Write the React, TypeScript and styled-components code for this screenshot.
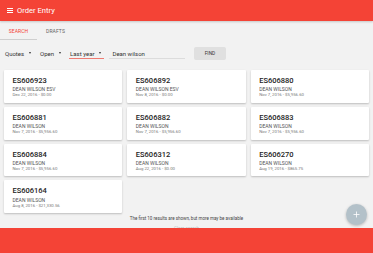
import React from "react";
import styled, { createGlobalStyle } from "styled-components";

const Global = createGlobalStyle`
  html, body { margin: 0; padding: 0; background: #f2f2f2; }
  body { font-family: Roboto, "Liberation Sans", Arial, sans-serif; color: #333; }
  * { box-sizing: border-box; }
`;

const RED = "#f44336";

const Page = styled.div`
  min-height: 253px;
  background: #f2f2f2;
`;

const Header = styled.header`
  height: 21px;
  background: ${RED};
  display: flex;
  align-items: center;
  padding-left: 7px;
  gap: 4px;
  box-shadow: 0 1px 2px rgba(0, 0, 0, 0.18);
  position: relative;
  z-index: 2;
`;

const Burger = styled.span`
  display: flex;
  flex-direction: column;
  justify-content: space-between;
  width: 6px;
  height: 5px;
  & > i {
    display: block;
    height: 1px;
    background: #fff;
  }
`;

const Title = styled.h1`
  margin: 0;
  font-size: 7.6px;
  font-weight: 400;
  color: #fff;
  line-height: 9px;
`;

const Tabs = styled.nav`
  display: flex;
  height: 19px;
`;

const Tab = styled.div<{ $active?: boolean }>`
  width: 37px;
  display: flex;
  align-items: center;
  justify-content: center;
  padding-top: 2px;
  font-size: 5px;
  letter-spacing: 0.1px;
  color: ${(p) => (p.$active ? RED : "#666")};
  border-bottom: 1px solid ${(p) => (p.$active ? "#cfcfcf" : "transparent")};
`;

const Filters = styled.div`
  display: flex;
  align-items: center;
  height: 14px;
  margin-top: 6.5px;
  padding-left: 3.5px;
  gap: 4.5px;
`;

const Select = styled.div<{ $focused?: boolean }>`
  display: inline-flex;
  align-items: center;
  gap: 5px;
  height: 10px;
  padding: 0 3px 0 1.5px;
  font-size: 6px;
  line-height: 9px;
  color: #333;
  border-bottom: 1px solid ${(p) => (p.$focused ? "#ef7b72" : "transparent")};
`;

const Caret = styled.span`
  width: 0;
  height: 0;
  border-left: 1.6px solid transparent;
  border-right: 1.6px solid transparent;
  border-top: 2px solid #333;
`;

const TextField = styled.div`
  width: 76px;
  height: 10px;
  margin-left: 0.5px;
  padding-left: 3px;
  font-size: 6px;
  line-height: 9px;
  color: #333;
  border-bottom: 1px solid #dcdcdc;
`;

const Button = styled.button`
  margin-left: 4px;
  width: 32px;
  height: 13px;
  border: none;
  border-radius: 2px;
  background: #e0e0e0;
  font-family: inherit;
  font-size: 4.8px;
  color: #333;
  padding: 0;
`;

const Grid = styled.div`
  display: grid;
  grid-template-columns: repeat(3, 1fr);
  column-gap: 5px;
  row-gap: 4px;
  padding: 0 4px;
  margin-top: 9.5px;
`;

const Card = styled.div`
  background: #fff;
  padding: 6px 8.5px 5.5px;
  box-shadow: 0 1px 2px rgba(0, 0, 0, 0.22);
  border-radius: 1px;
`;

const CardTitle = styled.div`
  font-size: 7.5px;
  line-height: 9px;
  font-weight: 500;
  color: #222;
`;

const CardName = styled.div`
  margin-top: 1.3px;
  font-size: 5px;
  line-height: 6px;
  color: #555;
`;

const CardMeta = styled.div`
  font-size: 4.3px;
  line-height: 5px;
  color: #777;
`;

const Note = styled.div`
  margin-top: 3px;
  text-align: center;
  font-size: 4.5px;
  line-height: 6px;
  color: #444;
`;

const Faint = styled.div`
  margin-top: 3.5px;
  text-align: center;
  font-size: 4.5px;
  line-height: 6px;
  color: #bdbdbd;
`;

const BottomBar = styled.div`
  position: fixed;
  left: 0;
  right: 0;
  bottom: 0;
  height: 25px;
  background: ${RED};
  z-index: 3;
`;

const Fab = styled.div`
  position: fixed;
  left: 346px;
  top: 203.5px;
  width: 21px;
  height: 21px;
  border-radius: 50%;
  background: #b3c1c9;
  box-shadow: 0 1px 3px rgba(0, 0, 0, 0.25);
  display: flex;
  align-items: center;
  justify-content: center;
  z-index: 4;
`;

type Order = { id: string; name: string; meta: string };

const orders: Order[] = [
  { id: "ES606923", name: "DEAN WILSON ESV", meta: "Dec 22, 2016 - $0.00" },
  { id: "ES606892", name: "DEAN WILSON ESV", meta: "Nov 8, 2016 - $0.00" },
  { id: "ES606880", name: "DEAN WILSON", meta: "Nov 7, 2016 - $5,956.60" },
  { id: "ES606881", name: "DEAN WILSON", meta: "Nov 7, 2016 - $5,956.60" },
  { id: "ES606882", name: "DEAN WILSON", meta: "Nov 7, 2016 - $5,956.60" },
  { id: "ES606883", name: "DEAN WILSON", meta: "Nov 7, 2016 - $5,956.60" },
  { id: "ES606884", name: "DEAN WILSON", meta: "Nov 7, 2016 - $5,956.60" },
  { id: "ES606312", name: "DEAN WILSON", meta: "Aug 22, 2016 - $0.00" },
  { id: "ES606270", name: "DEAN WILSON", meta: "Aug 19, 2016 - $865.75" },
  { id: "ES606164", name: "DEAN WILSON", meta: "Aug 8, 2016 - $21,330.56" },
];

export default function App() {
  return (
    <Page>
      <Global />
      <Header>
        <Burger>
          <i />
          <i />
          <i />
        </Burger>
        <Title>Order Entry</Title>
      </Header>
      <Tabs>
        <Tab $active>SEARCH</Tab>
        <Tab>DRAFTS</Tab>
      </Tabs>
      <Filters>
        <Select>
          Quotes <Caret />
        </Select>
        <Select>
          Open <Caret />
        </Select>
        <Select $focused>
          Last year <Caret />
        </Select>
        <TextField>Dean wilson</TextField>
        <Button>FIND</Button>
      </Filters>
      <Grid>
        {orders.map((o) => (
          <Card key={o.id}>
            <CardTitle>{o.id}</CardTitle>
            <CardName>{o.name}</CardName>
            <CardMeta>{o.meta}</CardMeta>
          </Card>
        ))}
      </Grid>
      <Note>The first 10 results are shown, but more may be available</Note>
      <Faint>Clear search</Faint>
      <Fab>
        <svg width="7" height="7" viewBox="0 0 7 7">
          <path d="M3.5 0.5v6M0.5 3.5h6" stroke="#fff" strokeWidth="0.8" />
        </svg>
      </Fab>
      <BottomBar />
    </Page>
  );
}
